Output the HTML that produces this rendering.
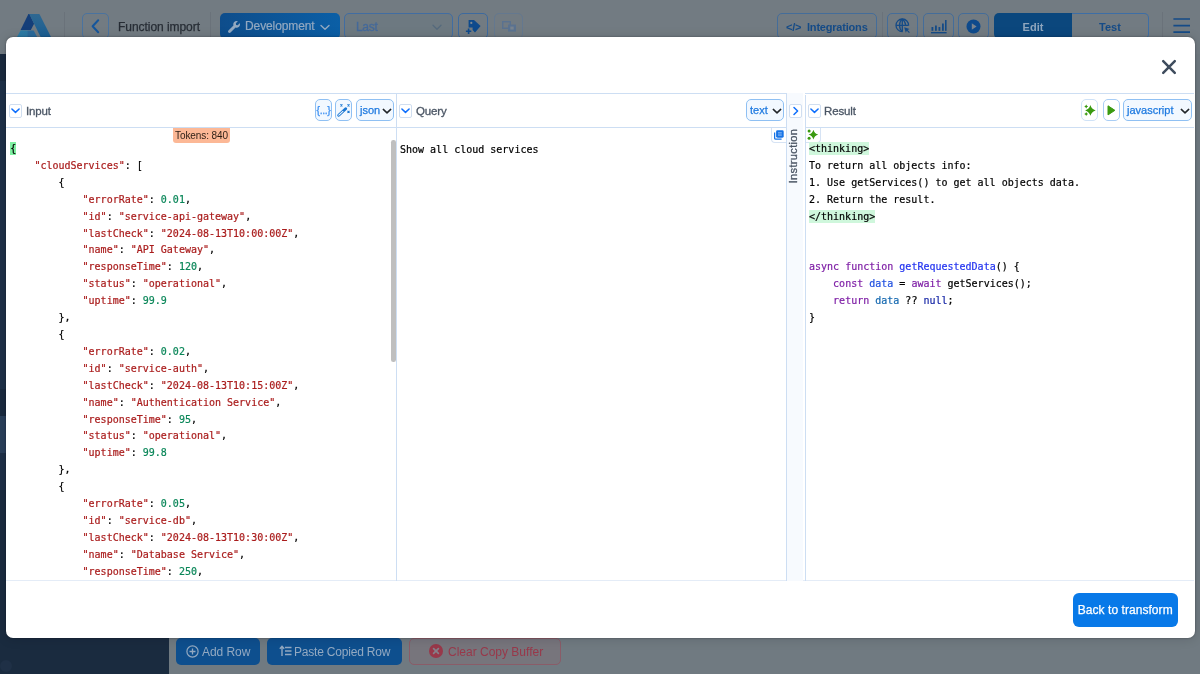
<!DOCTYPE html>
<html lang="en">
<head>
<meta charset="utf-8">
<title>Function import</title>
<style>
*{box-sizing:border-box;margin:0;padding:0}
html,body{width:1200px;height:674px;overflow:hidden;background:#727a82;font-family:"Liberation Sans",sans-serif;}
.abs{position:absolute}
#app{position:absolute;left:0;top:0;width:1200px;height:674px;overflow:hidden;background:#727a82;will-change:transform}
/* ---------- dimmed app behind modal ---------- */
#topbar{position:absolute;left:0;top:0;width:1200px;height:54px;background:#727b82}
#side{position:absolute;left:0;top:54px;width:169px;height:620px;background:#1e3047}
#side .s1{position:absolute;left:0;top:0;width:169px;height:27px;background:#1a2a3e}
#side .s2{position:absolute;left:0;top:335px;width:169px;height:27px;background:#1a2a3f}
#side .s3{position:absolute;left:0;top:362px;width:169px;height:37px;background:#2a3f5a}
#side .s4{position:absolute;left:0;top:436px;width:169px;height:184px;background:#1a2b3f}
#side .s5{position:absolute;left:0;top:606px;width:12px;height:12px;border-radius:50%;background:#1f3046}
#content{position:absolute;left:169px;top:54px;width:1031px;height:620px;background:#707a81}
.tb{position:absolute;top:13px;height:26px;border-radius:5px;border:1px solid #4a739f;font-size:14px;line-height:26px;color:#2b5f98;white-space:nowrap}
.tb.fill{background:linear-gradient(90deg,#0e4d8b,#0b5fa6);border:none;color:#93a9c1}
.vsep{position:absolute;top:12px;width:1px;height:28px;background:#6a727a}
.bb{position:absolute;top:638px;height:27px;border-radius:5px;font-size:14px;line-height:28.500px;white-space:nowrap;color:#93a9c1;background:#0e4f8e}
/* ---------- modal ---------- */
#modal{position:absolute;left:6px;top:37px;width:1188.500px;height:601.300px;background:#fff;border-radius:7px;overflow:hidden;box-shadow:0 0 2px rgba(0,0,0,.4),0 1px 12px rgba(0,10,20,.14)}
.hline{position:absolute;left:0;height:1px;background:#cddef3}
.vline{position:absolute;width:1px;background:#cddef3}
.lbl{position:absolute;top:66.700px;font-size:11.500px;line-height:14px;color:#4a5564;-webkit-text-stroke:0.300px #4a5564;letter-spacing:-0.15px;white-space:nowrap}
.tg{position:absolute;top:67px;width:13px;height:14px;border:1px solid #d0def0;border-radius:2px;background:#fff}
.hb{position:absolute;top:62px;height:22px;border:1px solid #8fc0f3;border-radius:5px;background:#f2f8ff;font-size:11px;line-height:20px;color:#1f7ae0;-webkit-text-stroke:0.250px #1f7ae0;white-space:nowrap}
.code{position:absolute;font-family:"DejaVu Sans Mono","Liberation Mono",monospace;font-size:10px;line-height:16.9px;white-space:pre;color:#000;-webkit-text-stroke:0.200px}
.k{color:#aa1c1c}.n{color:#098658}.kw{color:#7f1fa6}.b{color:#2233f0}.f{color:#795e26}.v{color:#1468b0}
.hl{background:#cff7dc;padding:1px 0 1px}
.b2{color:#1f4fe0}.nl{color:#1a2aa8}
.bm{background:#7ff0a2;display:inline-block;height:13px;line-height:13px;vertical-align:baseline}
</style>
</head>
<body>
<div id="app">
  <div id="topbar"></div>
  <div id="side"><div class="s1"></div><div class="s2"></div><div class="s3"></div><div class="s4"></div><div class="s5"></div></div>
  <div id="content"></div>

  <!-- top bar widgets -->
  <div id="tbw">
  <!-- logo -->
  <svg class="abs" style="left:14px;top:10px" width="42" height="34" viewBox="0 0 42 34">
    <defs><linearGradient id="lg1" x1="0" y1="0" x2="0" y2="1"><stop offset="0" stop-color="#2f6891"/><stop offset="1" stop-color="#1a5e93"/></linearGradient>
    <linearGradient id="lg2" x1="0" y1="0" x2="1" y2="0"><stop offset="0" stop-color="#2b7ca6"/><stop offset="0.5" stop-color="#2d79a3"/><stop offset="0.55" stop-color="#2b6a9b"/><stop offset="1" stop-color="#2b6a9b"/></linearGradient></defs>
    <path d="M14.4 3.900 L15.600 3.900 L20.100 13.700 L16.800 20 L6.600 20 Z" fill="#143e79"/>
    <path d="M15.200 3.900 L25.400 3.900 L37.300 27.500 L26.900 27.500 Z" fill="url(#lg1)"/>
    <path d="M6.700 20.300 L19.700 20.500 L23.400 27.500 L2.700 27.500 Z" fill="url(#lg2)"/>
  </svg>
  <div class="vsep" style="left:64px"></div>
  <div class="tb" style="left:82px;width:27px"><svg width="25" height="24" viewBox="0 0 25 24" style="position:absolute;left:0;top:0"><path d="M15.2 6.2 L9.6 12.2 L15.2 18.2" fill="none" stroke="#15569c" stroke-width="2" stroke-linecap="round" stroke-linejoin="round"/></svg></div>
  <div class="abs" style="left:118px;top:18px;font-size:12px;line-height:18px;color:#272d35;-webkit-text-stroke:0.250px #272d35;white-space:nowrap;letter-spacing:-0.05px">Function import</div>
  <div class="vsep" style="left:210px"></div>
  <div class="tb fill" style="left:220px;width:120px">
    <svg width="12" height="12" viewBox="0 0 512 512" style="position:absolute;left:8px;top:8px"><path fill="#93a9c1" d="M507.7 109.1c-2.200-9-13.500-12.100-20.100-5.500l-74.400 74.400-67.900-11.300-11.300-67.900 74.400-74.400c6.600-6.600 3.400-17.900-5.700-20.200-47.400-11.700-99.600.9-136.600 37.900-39.600 39.600-50.600 97.100-34.100 147.200L18.700 402.800c-25 25-25 65.500 0 90.500s65.500 25 90.500 0l213.200-213.200c50.100 16.700 107.500 5.700 147.400-34.200 37.100-37.100 49.700-89.300 37.900-136.800z"/></svg>
    <span style="position:absolute;left:25px;top:0;font-size:12px;letter-spacing:-0.100px;-webkit-text-stroke:0.200px #93a9c1">Development</span>
    <svg width="10" height="7" viewBox="0 0 10 7" style="position:absolute;left:100px;top:11px"><path d="M1 1.5 L5 5.3 L9 1.5" fill="none" stroke="#93a9c1" stroke-width="1.4" stroke-linecap="round" stroke-linejoin="round"/></svg>
  </div>
  <div class="tb" style="left:344px;width:109px;border-color:#416da2;background:#6d7981"><span style="position:absolute;left:11px;top:0;font-size:12px;letter-spacing:-0.300px;color:#44699a;-webkit-text-stroke:0.300px #44699a">Last</span><svg width="10" height="7" viewBox="0 0 10 7" style="position:absolute;left:87px;top:10px"><path d="M1 1.2 L5 5.2 L9 1.2" fill="none" stroke="#566a7d" stroke-width="1.300" stroke-linecap="round" stroke-linejoin="round"/></svg></div>
  <div class="tb" style="left:458px;width:30px;border-color:#3d6a9f"><svg width="18" height="16" viewBox="0 0 18 16" style="position:absolute;left:6px;top:5px"><path d="M3.6 1 H9 L15.6 7 L10 13.4 L7.6 11 V8.6 H3.6 Z" fill="#0e4a8c"/><circle cx="6.3" cy="3.9" r="1.1" fill="#7d8994"/><path d="M3.6 9.6 V15 M0.9 12.3 H6.3" stroke="#0e4a8c" stroke-width="1.6" fill="none"/></svg></div>
  <div class="tb" style="left:494px;width:29px;border-color:#64788f"><svg width="15" height="12" viewBox="0 0 15 12" style="position:absolute;left:7px;top:7px"><rect x="0.7" y="0.7" width="7.6" height="6.6" fill="none" stroke="#5a7290" stroke-width="1.4"/><rect x="6" y="3.6" width="8" height="7" fill="#5a7290"/><rect x="8.3" y="5.6" width="3.4" height="3" fill="#7a848f"/></svg></div>

  <div class="tb" style="left:777px;width:100px;border-color:#446d9a"><span style="position:absolute;left:8px;top:0;font-size:11px;font-weight:bold;color:#154b87;letter-spacing:-0.200px">&lt;/&gt;</span><span style="position:absolute;left:29px;top:0;font-size:11px;font-weight:bold;color:#154b87;letter-spacing:-0.2px">Integrations</span></div>
  <div class="vsep" style="left:882px"></div>
  <div class="tb" style="left:887px;width:31px;border-color:#446d9a"><svg width="16" height="16" viewBox="0 0 16 16" style="position:absolute;left:7px;top:4px"><g fill="none" stroke="#154b87" stroke-width="1.3"><path d="M13.6 7.6 A6.3 6.3 0 1 0 7.6 13.6"/><path d="M1.2 7.3 H13.4 M7.3 1 V13.4"/><path d="M7.3 1 C3.6 4 3.6 10.600 7.3 13.600 M7.300 1 C9.600 2.900 10.600 5 10.600 7.300"/></g><path d="M9.200 9.200 L14.600 11 L12.600 12 L14.800 14.200 L14 15 L11.800 12.800 L10.800 14.800 Z" fill="#154b87"/></svg></div>
  <div class="tb" style="left:923px;width:31px;border-color:#446d9a"><svg width="17" height="15" viewBox="0 0 17 15" style="position:absolute;left:6px;top:5px"><g fill="#154b87"><rect x="1.5" y="8" width="1.800" height="3.800"/><rect x="5" y="6.500" width="1.800" height="5.300"/><rect x="8.500" y="8" width="1.800" height="3.800"/><rect x="12" y="4.500" width="1.800" height="7.300"/><rect x="15" y="1" width="1.600" height="10.800"/><rect x="1" y="13" width="15.600" height="1.400"/></g></svg></div>
  <div class="tb" style="left:958px;width:31px;border-color:#446d9a"><svg width="15" height="15" viewBox="0 0 15 15" style="position:absolute;left:7px;top:5px"><circle cx="7.500" cy="7.500" r="7" fill="#0e4a8c"/><path d="M5.800 4.300 L10.600 7.500 L5.800 10.700 Z" fill="#7a848f"/></svg></div>
  <div class="abs" style="left:994px;top:13px;width:78px;height:26px;background:#0b477d;border-radius:5px 0 0 5px;color:#8fa6be;font-size:11px;font-weight:bold;line-height:28px;text-align:center">Edit</div>
  <div class="abs" style="left:1072px;top:13px;width:77px;height:26px;border:1px solid #3d6ea6;border-left:none;border-radius:0 5px 5px 0;color:#154b87;font-size:11px;font-weight:bold;line-height:26px;text-align:center">Test</div>
  <div class="vsep" style="left:1162px"></div>
  <svg class="abs" style="left:1172px;top:16px" width="20" height="20" viewBox="0 0 20 20"><path d="M1.400 3 H18 M1.400 9.700 H18 M1.400 16.200 H18" stroke="#154b87" stroke-width="1.700" fill="none"/></svg>
  </div>

  <!-- bottom buttons -->
  <div id="bbw">
  <div class="bb" style="left:176px;width:84px"><svg width="13" height="13" viewBox="0 0 13 13" style="position:absolute;left:10px;top:7px"><circle cx="6.5" cy="6.5" r="5.600" fill="none" stroke="#93a9c1" stroke-width="1.2"/><path d="M6.500 3.500 V9.500 M3.500 6.500 H9.500" stroke="#93a9c1" stroke-width="1.300"/></svg><span style="position:absolute;left:26px;top:0;font-size:12px;letter-spacing:-0.05px">Add Row</span></div>
  <div class="bb" style="left:267px;width:135px"><svg width="13" height="12" viewBox="0 0 13 12" style="position:absolute;left:12px;top:7px"><path d="M3 11 V1.500 M0.800 3.700 L3 1.300 L5.200 3.700" fill="none" stroke="#93a9c1" stroke-width="1.400"/><path d="M6 2.500 H12.500 M6 6 H12.500 M6 9.500 H12.500" stroke="#93a9c1" stroke-width="1.500"/></svg><span style="position:absolute;left:27px;top:0;font-size:12px;letter-spacing:-0.200px">Paste Copied Row</span></div>
  <div class="bb" style="left:409px;width:152px;background:#77757c;border:1px solid #8a5c68;color:#98384a"><svg width="14" height="14" viewBox="0 0 14 14" style="position:absolute;left:19px;top:5px"><circle cx="7" cy="7" r="7" fill="#98384a"/><path d="M4.600 4.600 L9.400 9.400 M9.400 4.600 L4.600 9.400" stroke="#85808a" stroke-width="1.700" stroke-linecap="round"/></svg><span style="position:absolute;left:38px;top:-1px;font-size:12px">Clear Copy Buffer</span></div>
  </div>

  <div id="modal">
    <!-- close -->
    <svg class="abs" style="left:1154.700px;top:21.900px" width="16" height="16" viewBox="0 0 16 16"><path d="M2.200 2.200 L13.800 13.800 M13.800 2.200 L2.200 13.800" stroke="#3f4d5e" stroke-width="2.500" stroke-linecap="round" fill="none"/></svg>
    <!-- borders -->
    <div class="hline" style="top:56px;width:1188px"></div>
    <div class="hline" style="top:90px;width:1188px"></div>
    <div class="hline" style="top:543px;width:1188px;background:#e4ecf7"></div>
    <div class="vline" style="left:390px;top:56px;height:488px"></div>
    <div class="abs" style="left:780px;top:56px;width:17px;height:488px;background:#f7fafe;border-left:1px solid #cddef3"></div>
    <div class="vline" style="left:799px;top:58px;height:486px"></div>
    <div class="abs" style="left:796.500px;top:56px;width:2.500px;height:1px;background:#fff"></div>
    <div class="abs" style="left:781px;top:90px;width:16px;height:1px;background:#f7fafe"></div>
    <div class="abs" style="left:797px;top:90px;width:2px;height:1px;background:#fff"></div>

    <!-- INPUT panel -->
    <div class="tg" style="left:3px"><svg width="11" height="12" viewBox="0 0 11 12" style="position:absolute;left:0;top:0"><path d="M1.900 4 L5.500 7.400 L9.100 4" fill="none" stroke="#0d6efd" stroke-width="1.500" stroke-linecap="round" stroke-linejoin="round"/></svg></div>
    <div class="lbl" style="left:20px">Input</div>
    <div class="hb" style="left:309px;width:17px"><span style="position:absolute;left:0;width:15px;text-align:center;top:-0.500px;font-size:10.500px;letter-spacing:-0.350px;color:#3b8ff2;-webkit-text-stroke:0.250px #3b8ff2">{...}</span></div>
    <div class="hb" style="left:329px;width:17px"><svg width="15" height="20" viewBox="0 0 15 20" style="position:absolute;left:0;top:0"><path d="M2.700 15.300 L9.700 8.700" stroke="#1976d2" stroke-width="2.900" stroke-linecap="round" fill="none"/><path d="M2.800 15.200 L6.900 11.350" stroke="#f2f8ff" stroke-width="1.100" stroke-linecap="round" fill="none"/><path d="M4.400 4.300 l2 2 M6.400 4.300 l-2 2 M11.500 4.300 l2 2 M13.500 4.300 l-2 2 M11.500 10.800 l2 2 M13.500 10.800 l-2 2" stroke="#1976d2" stroke-width="1.100" fill="none"/></svg></div>
    <div class="hb" style="left:350px;width:38px"><span style="position:absolute;left:3px;top:0">json</span><svg width="10" height="7" viewBox="0 0 10 7" style="position:absolute;right:1px;top:7.600px"><path d="M1.300 1.400 L5 4.900 L8.700 1.400" fill="none" stroke="#212529" stroke-width="1.500" stroke-linecap="round" stroke-linejoin="round"/></svg></div>
    <div class="abs" style="left:167px;top:90.500px;width:57px;height:15px;background:#fcb896;border-radius:0 0 3px 3px;font-size:10px;line-height:15px;text-align:center;color:#2b1d14;letter-spacing:-0.100px;white-space:nowrap">Tokens: 840</div>
    <div class="abs" style="left:0;top:91px;width:390px;height:452px;overflow:hidden">
      <pre class="code" style="left:4.300px;top:13px"><span class="bm">{</span>
    <span class="k">&quot;cloudServices&quot;</span>: [
        {
            <span class="k">&quot;errorRate&quot;</span>: <span class="n">0.01</span>,
            <span class="k">&quot;id&quot;</span>: <span class="k">&quot;service-api-gateway&quot;</span>,
            <span class="k">&quot;lastCheck&quot;</span>: <span class="k">&quot;2024-08-13T10:00:00Z&quot;</span>,
            <span class="k">&quot;name&quot;</span>: <span class="k">&quot;API Gateway&quot;</span>,
            <span class="k">&quot;responseTime&quot;</span>: <span class="n">120</span>,
            <span class="k">&quot;status&quot;</span>: <span class="k">&quot;operational&quot;</span>,
            <span class="k">&quot;uptime&quot;</span>: <span class="n">99.9</span>
        },
        {
            <span class="k">&quot;errorRate&quot;</span>: <span class="n">0.02</span>,
            <span class="k">&quot;id&quot;</span>: <span class="k">&quot;service-auth&quot;</span>,
            <span class="k">&quot;lastCheck&quot;</span>: <span class="k">&quot;2024-08-13T10:15:00Z&quot;</span>,
            <span class="k">&quot;name&quot;</span>: <span class="k">&quot;Authentication Service&quot;</span>,
            <span class="k">&quot;responseTime&quot;</span>: <span class="n">95</span>,
            <span class="k">&quot;status&quot;</span>: <span class="k">&quot;operational&quot;</span>,
            <span class="k">&quot;uptime&quot;</span>: <span class="n">99.8</span>
        },
        {
            <span class="k">&quot;errorRate&quot;</span>: <span class="n">0.05</span>,
            <span class="k">&quot;id&quot;</span>: <span class="k">&quot;service-db&quot;</span>,
            <span class="k">&quot;lastCheck&quot;</span>: <span class="k">&quot;2024-08-13T10:30:00Z&quot;</span>,
            <span class="k">&quot;name&quot;</span>: <span class="k">&quot;Database Service&quot;</span>,
            <span class="k">&quot;responseTime&quot;</span>: <span class="n">250</span>,</pre>
      <div class="abs" style="left:385.300px;top:12.300px;width:4.600px;height:222.200px;background:#bfbfbf;border-radius:2.300px"></div>
    </div>

    <!-- QUERY panel -->
    <div class="tg" style="left:393px"><svg width="11" height="12" viewBox="0 0 11 12" style="position:absolute;left:0;top:0"><path d="M1.900 4 L5.500 7.400 L9.100 4" fill="none" stroke="#0d6efd" stroke-width="1.500" stroke-linecap="round" stroke-linejoin="round"/></svg></div>
    <div class="lbl" style="left:410px">Query</div>
    <div class="hb" style="left:740px;width:38px"><span style="position:absolute;left:3px;top:0">text</span><svg width="10" height="7" viewBox="0 0 10 7" style="position:absolute;right:1px;top:7.600px"><path d="M1.300 1.400 L5 4.900 L8.700 1.400" fill="none" stroke="#212529" stroke-width="1.500" stroke-linecap="round" stroke-linejoin="round"/></svg></div>
    <pre class="code" style="left:394px;top:104.500px">Show all cloud services</pre>
    <div class="abs" style="left:765px;top:91px;width:15px;height:15px;border-left:1px solid #d6e3f4;border-bottom:1px solid #d6e3f4;border-radius:0 0 0 4px;background:#fff"><svg width="11" height="10" viewBox="0 0 11 10" style="position:absolute;left:2px;top:1.500px"><rect x="2.100" y="0.300" width="7.600" height="7.400" rx="1.400" fill="#1673e6"/><rect x="4" y="2.300" width="3.800" height="1.100" fill="#8fbcf5"/><rect x="4" y="4.500" width="3.800" height="1.100" fill="#8fbcf5"/><path d="M0.600 2.400 V8 a1.200 1.200 0 0 0 1.200 1.200 H7.600" fill="none" stroke="#1673e6" stroke-width="1.300"/></svg></div>

    <!-- INSTRUCTION strip -->
    <div class="tg" style="left:782.500px"><svg width="11" height="12" viewBox="0 0 11 12" style="position:absolute;left:0;top:0"><path d="M4 2.5 L7.6 6 L4 9.5" fill="none" stroke="#0d6efd" stroke-width="1.5" stroke-linecap="round" stroke-linejoin="round"/></svg></div>
    <div class="abs" style="left:781px;top:91px;width:18px;height:56px"><div style="position:absolute;left:6.300px;top:27.800px;transform:translate(-50%,-50%) rotate(-90deg);font-size:11px;color:#4a5564;-webkit-text-stroke:0.300px #4a5564;white-space:nowrap;letter-spacing:0.350px;line-height:14px">Instruction</div></div>

    <!-- RESULT panel -->
    <div class="tg" style="left:802px"><svg width="11" height="12" viewBox="0 0 11 12" style="position:absolute;left:0;top:0"><path d="M1.900 4 L5.500 7.400 L9.100 4" fill="none" stroke="#0d6efd" stroke-width="1.500" stroke-linecap="round" stroke-linejoin="round"/></svg></div>
    <div class="lbl" style="left:818px">Result</div>
    <div class="hb" style="left:1075px;width:17px;background:#fff;border-color:#cfe2f7"><svg width="15" height="20" viewBox="0 0 15 20" style="position:absolute;left:0;top:0"><path d="M8.4 5.1000000000000005 Q9.566 9.234 13.7 10.4 Q9.566 11.566 8.4 15.7 Q7.234 11.566 3.1000000000000005 10.4 Q7.234 9.234 8.4 5.1000000000000005 Z M4.2 4.4 Q4.6000000000000005 6.0 6.2 6.4 Q4.6000000000000005 6.800000000000001 4.2 8.4 Q3.8000000000000003 6.800000000000001 2.2 6.4 Q3.8000000000000003 6.0 4.2 4.4 Z M4.2 12.1 Q4.6000000000000005 13.7 6.2 14.1 Q4.6000000000000005 14.5 4.2 16.1 Q3.8000000000000003 14.5 2.2 14.1 Q3.8000000000000003 13.7 4.2 12.1 Z" fill="#3a9a10"/></svg></div>
    <div class="hb" style="left:1097px;width:17px;background:#fff;border-color:#a8cdf5"><svg width="15" height="20" viewBox="0 0 15 20" style="position:absolute;left:0;top:0"><path d="M4 5.800 L10.900 10.350 L4 14.900 Z" fill="#3a9a10" stroke="#3a9a10" stroke-width="1" stroke-linejoin="round"/></svg></div>
    <div class="hb" style="left:1117px;width:69px"><span style="position:absolute;left:3px;top:0">javascript</span><svg width="10" height="7" viewBox="0 0 10 7" style="position:absolute;right:1px;top:7.600px"><path d="M1.300 1.400 L5 4.900 L8.700 1.400" fill="none" stroke="#212529" stroke-width="1.500" stroke-linecap="round" stroke-linejoin="round"/></svg></div>
    <div class="abs" style="left:800px;top:91px;width:15px;height:15px;border-right:1px solid #d6e3f4;border-bottom:1px solid #d6e3f4;border-radius:0 0 4px 0;background:#fff"><svg width="14" height="15" viewBox="0 0 14 15" style="position:absolute;left:0;top:-1px"><path d="M7.4 2.6999999999999993 Q8.48 6.52 12.3 7.6 Q8.48 8.68 7.4 12.5 Q6.32 8.68 2.5 7.6 Q6.32 6.52 7.4 2.6999999999999993 Z" fill="#3a9a10"/><circle cx="3.100" cy="4.100" r="1.500" fill="#3a9a10"/><circle cx="3.100" cy="11.200" r="1.500" fill="#3a9a10"/></svg></div>
    <pre class="code" style="left:803px;top:104px"><span class="hl">&lt;thinking&gt;</span>
To return all objects info:
1. Use getServices() to get all objects data.
2. Return the result.
<span class="hl">&lt;/thinking&gt;</span>


<span class="kw">async</span> <span class="kw">function</span> <span class="b">getRequestedData</span>() {
    <span class="kw">const</span> <span class="b2">data</span> = <span class="kw">await</span> getServices();
    <span class="kw">return</span> <span class="v">data</span> ?? <span class="nl">null</span>;
}</pre>

    <!-- footer -->
    <div class="abs" style="left:1067px;top:556px;width:104.500px;height:33.700px;background:#0879e8;border-radius:6px;color:#fff;-webkit-text-stroke:0.250px #fff;font-size:12px;line-height:34.600px;text-align:center;white-space:nowrap;letter-spacing:0.05px">Back to transform</div>
  </div>
</div>
</body>
</html>
